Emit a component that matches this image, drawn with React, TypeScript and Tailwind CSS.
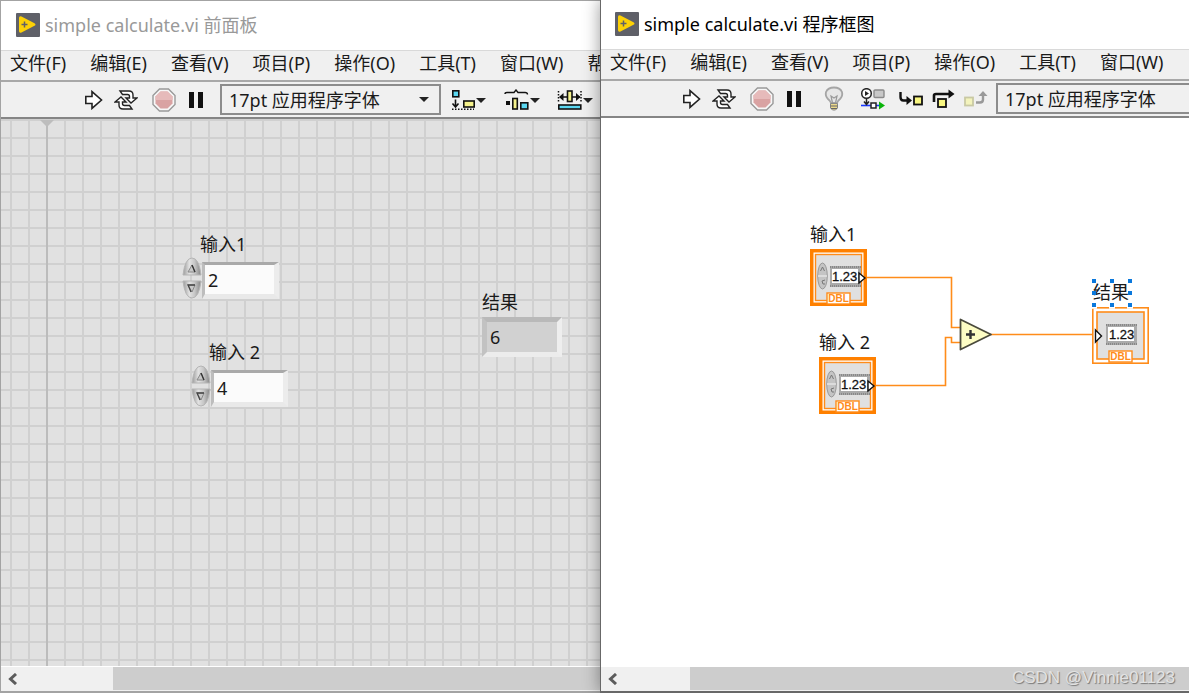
import { useState } from 'react';
import type { ReactNode } from 'react';

const diagramMenus = ['文件(F)', '编辑(E)', '查看(V)', '项目(P)', '操作(O)', '工具(T)', '窗口(W)'];
const panelMenus = [...diagramMenus, '帮'];

const fonts = "font-['Noto_Sans','Noto_Sans_CJK_SC',sans-serif]";

function LogoIcon() {
  return (
    <svg width="24" height="24" viewBox="0 0 24 24" className="shrink-0">
      <rect width="24" height="24" rx="1" fill="#5f6068" />
      <path d="M3 5Q3 2.500 5.500 3.400L18.500 10.200Q20.500 11.500 18.500 12.800L5.500 19.600Q3 20.400 3 18Z" fill="#fdd106" />
      <path d="M5.500 11.500H11.500M8.500 8.500V14.500" stroke="#5f6068" strokeWidth="1.5" />
    </svg>
  );
}

function RunIcon() {
  return (
    <svg width="18" height="20" viewBox="0 0 18 20">
      <path d="M.8 6.5H7V1.6L16.5 10L7 18.4V13.5H.8Z" fill="#fff" stroke="#222" strokeWidth="1.6" />
    </svg>
  );
}

function RunLoopIcon() {
  return (
    <svg width="24" height="20" viewBox="0 0 24 20" strokeWidth="1.4" stroke="#222" fill="#fff">
      <path d="M6 1H15Q19 1 19 5V8H23L17 13L12 8H15.500V6.500Q15.500 4.500 13.500 4.500H8.500Z" />
      <path d="M18 19H9Q5 19 5 15V12H1L7 7L12 12H8.500V13.500Q8.500 15.500 10.500 15.500H15.500Z" />
    </svg>
  );
}

function StopIcon() {
  return (
    <svg width="24" height="24" viewBox="0 0 24 24">
      <path d="M7.5 1H16.5L23 7.5V16.5L16.5 23H7.5L1 16.5V7.5Z" fill="#f7f7f7" stroke="#999" strokeWidth="1.4" />
      <path d="M8.5 3.5H15.5L20.5 8.5V15.5L15.5 20.5H8.5L3.5 15.5V8.5Z" fill="#d9a2a2" />
      <path d="M8.5 3.5H15.5L20.5 8.5V12H3.5V8.5Z" fill="#e6baba" />
    </svg>
  );
}

function PauseIcon() {
  return (
    <svg width="16" height="16" viewBox="0 0 16 16">
      <path d="M1 0H6V16H1ZM10 0H15V16H10Z" fill="#111" />
    </svg>
  );
}

function Caret() {
  return <path d="M0 0H10L5 5Z" fill="#222" />;
}

function AlignIcon() {
  return (
    <svg width="36" height="22" viewBox="0 0 36 22">
      <rect x="1.8" y="1.8" width="6" height="6" fill="#5ad7f0" stroke="#111" strokeWidth="1.6" />
      <path d="M4.5 10.5V17M1.5 14.5L4.5 18L7.5 14.5" fill="none" stroke="#111" strokeWidth="1.6" />
      <rect x="12.8" y="12" width="10.4" height="6" fill="#f5f28c" stroke="#111" strokeWidth="1.6" />
      <path d="M1 20.3H23" stroke="#111" strokeWidth="1.5" strokeDasharray="1.5 1.5" />
      <g transform="translate(25 9)"><Caret /></g>
    </svg>
  );
}

function DistributeIcon() {
  return (
    <svg width="36" height="22" viewBox="0 0 36 22">
      <path d="M1 5Q1 3.5 3 3.5H10L12 1L14 3.5H21Q23.500 3.500 23.5 5.5" fill="none" stroke="#111" strokeWidth="1.4" />
      <rect x="2" y="12" width="4" height="4" fill="#111" />
      <rect x="8.800" y="9.500" width="4.500" height="10.500" fill="#f5f28c" stroke="#111" strokeWidth="1.6" />
      <rect x="16.800" y="13.800" width="7" height="6.200" fill="#5ad7f0" stroke="#111" strokeWidth="1.6" />
      <g transform="translate(26 9)"><Caret /></g>
    </svg>
  );
}

function ResizeIcon() {
  return (
    <svg width="36" height="22" viewBox="0 0 36 22">
      <path d="M1.500 2V14M24 2V14" stroke="#111" strokeWidth="1.500" strokeDasharray="1.5 1.5" />
      <path d="M3 8H10M15 8H23" stroke="#111" strokeWidth="1.5" />
      <path d="M2 8L6.500 4V12ZM23.500 8L19 4V12Z" fill="#111" />
      <rect x="10.500" y="2" width="4.500" height="10.500" fill="#f5f28c" stroke="#111" strokeWidth="1.6" />
      <rect x="1.800" y="16" width="22" height="4" fill="#5ad7f0" stroke="#111" strokeWidth="1.6" />
      <g transform="translate(26 9)"><Caret /></g>
    </svg>
  );
}

function BulbIcon() {
  return (
    <svg width="20" height="26" viewBox="0 0 20 26">
      <path d="M7 17Q6.500 15 4 13Q1 10 2 6Q4 1.500 10 1.500T18 6Q19 10 16 13Q13.500 15 13 17Z" fill="#e6e6e6" stroke="#a5a5a5" strokeWidth="1.8" />
      <path d="M8.500 17L7 10L10 12L13 10L11.500 17" fill="none" stroke="#999" strokeWidth="1.2" />
      <path d="M6.500 17.500H13.500V22L11.500 24H8.500L6.500 22Z" fill="#ecd98a" stroke="#888" />
      <path d="M6.500 20H13.500M7 22.500H13" stroke="#666" strokeWidth="1.2" />
    </svg>
  );
}

function RetainIcon() {
  return (
    <svg width="26" height="22" viewBox="0 0 26 22">
      <circle cx="6.500" cy="5.500" r="4.800" fill="#fff" stroke="#222" strokeWidth="1.5" />
      <path d="M5 3L9 5.500L5 8Z" fill="#222" />
      <rect x="14" y="2" width="10" height="7.500" rx="1" fill="#c8c8c8" stroke="#8a8a8a" strokeWidth="1.400" />
      <path d="M1 17.500H20" stroke="#1838ff" strokeWidth="1.6" />
      <path d="M6.500 10.500V16M4 13.500L6.500 16.500L9 13.500" fill="none" stroke="#222" strokeWidth="1.5" />
      <rect x="11" y="15" width="5" height="5" fill="#fff" stroke="#222" strokeWidth="1.5" />
      <path d="M19 13.500L25 17.500L19 21.500Z" fill="#0ab40a" />
    </svg>
  );
}

function StepIntoIcon() {
  return (
    <svg width="26" height="18" viewBox="0 0 26 18">
      <path d="M1.500 2V7Q1.500 10.500 4.500 10.500H9" fill="none" stroke="#111" strokeWidth="2.4" />
      <path d="M7.500 6L13 10.500L7.500 15Z" fill="#111" />
      <rect x="15" y="6.500" width="8" height="8" fill="#f8f680" stroke="#111" strokeWidth="1.8" />
    </svg>
  );
}

function StepOverIcon() {
  return (
    <svg width="24" height="20" viewBox="0 0 24 20">
      <path d="M2 13V6.500Q2 5 4 5H17" fill="none" stroke="#111" strokeWidth="2.6" />
      <path d="M16.500 .5L22.500 5L16.500 9.500Z" fill="#111" />
      <rect x="6" y="10" width="8" height="8" fill="#f8f680" stroke="#111" strokeWidth="1.8" />
    </svg>
  );
}

function StepOutIcon() {
  return (
    <svg width="26" height="18" viewBox="0 0 26 18">
      <rect x="2" y="7.500" width="8" height="8" fill="#f3f3bc" stroke="#c9c9a4" strokeWidth="1.800" />
      <path d="M13 12.500H17Q20 12.500 20 9.500V5" fill="none" stroke="#999" strokeWidth="2.4" />
      <path d="M15.500 6L20 1L24.500 6Z" fill="#999" />
    </svg>
  );
}

function ToolButton({ label, children }: { label: string; children: ReactNode }) {
  return (
    <button aria-label={label} className="flex shrink-0 items-center justify-center">
      {children}
    </button>
  );
}

function TitleBar({ title, active }: { title: string; active?: boolean }) {
  return (
    <div className={`flex h-[49px] shrink-0 items-center gap-[5px] bg-white pb-[2px] ${active ? 'pl-[14px]' : 'pl-[15px]'}`}>
      <LogoIcon />
      <h1 className={`whitespace-pre text-[18px] leading-6 ${active ? 'text-black' : 'text-[#999]'}`}>{title}</h1>
    </div>
  );
}

function MenuBar({ menus }: { menus: string[] }) {
  return (
    <nav className="flex h-[32px] shrink-0 items-start gap-6 overflow-hidden border-t border-b-2 border-t-[#d9d9d9] border-b-[#a8a8a8] bg-[#f0f0f0] pl-[9px]">
      {menus.map((menu) => (
        <button key={menu} className="shrink-0 text-[18px] leading-6 text-[#1a1a1a]">
          {menu}
        </button>
      ))}
    </nav>
  );
}

function FontSelect() {
  return (
    <div className="relative shrink-0">
      <select
        aria-label="字体"
        className="block h-[31px] w-[221px] appearance-none border-2 border-[#8c8c8c] bg-[#f0f0f0] pl-[7px] text-[18px] leading-6 text-[#1a1a1a]"
      >
        <option>17pt 应用程序字体</option>
      </select>
      <svg width="10" height="5" className="pointer-events-none absolute right-3 top-[13px]">
        <Caret />
      </svg>
    </div>
  );
}

function RunButtons() {
  return (
    <>
      <ToolButton label="运行"><RunIcon /></ToolButton>
      <div className="ml-[11px] flex"><ToolButton label="连续运行"><RunLoopIcon /></ToolButton></div>
      <div className="ml-[14px] flex"><ToolButton label="中止执行"><StopIcon /></ToolButton></div>
      <div className="ml-[12px] flex"><ToolButton label="暂停"><PauseIcon /></ToolButton></div>
    </>
  );
}

function ScrollBar({ trackClass }: { trackClass: string }) {
  return (
    <div className="flex h-[25px] shrink-0 items-stretch border-t border-white bg-[#f0f0f0]">
      <button aria-label="向左滚动" className={`flex shrink-0 items-center pl-[5px] ${trackClass}`}>
        <svg width="12" height="12" viewBox="0 0 12 12">
          <path d="M10 1L4.500 6L10 11" fill="none" stroke="#5c5c5c" strokeWidth="3" />
        </svg>
      </button>
      <div className="mb-px flex-1 bg-[#cdcdcd]" />
    </div>
  );
}

function Spinner() {
  return (
    <svg width="20" height="42" viewBox="0 0 20 42">
      <defs>
        <linearGradient id="metal" x1="0" x2="1">
          <stop offset="0" stopColor="#999" />
          <stop offset=".35" stopColor="#e2e2e2" />
          <stop offset=".65" stopColor="#c6c6c6" />
          <stop offset="1" stopColor="#858585" />
        </linearGradient>
      </defs>
      <path d="M1 18Q3 1 10 1T19 18Z" fill="url(#metal)" stroke="#b5b5b5" />
      <path d="M1 24H19Q17 41 10 41T1 24Z" fill="url(#metal)" stroke="#b5b5b5" />
      <path d="M6 15L10 8L13 15Z" fill="#c8c8c8" stroke="#888" />
      <path d="M10 8L13 15" stroke="#333" strokeWidth="1.4" />
      <path d="M6 28H13L10 35Z" fill="#c8c8c8" stroke="#888" />
      <path d="M13 28H6L9 35" fill="none" stroke="#444" strokeWidth="1.3" />
    </svg>
  );
}

function NumericControl({ id, label, value, onChange }: { id: string; label: string; value: string; onChange: (value: string) => void }) {
  return (
    <div className="w-[98px]">
      <label htmlFor={id} className="block whitespace-pre pl-[18px] text-[18px] leading-6 text-[#1a1a1a]">
        {label}
      </label>
      <div className="mt-px flex items-end">
        <Spinner />
        <input
          id={id}
          value={value}
          onChange={(e) => onChange(e.target.value)}
          className="h-[37px] w-[77px] border-t-[3px] border-r-[5px] border-b-[5px] border-l-[3px] border-t-[#a9a9a9] border-r-[#ececec] border-b-[#e9e9e9] border-l-[#bdbdbd] bg-[#fbfbfb] pl-[3px] text-[18px] leading-6 text-[#1a1a1a]"
        />
      </div>
    </div>
  );
}

function FrontPanel({ a, b, setA, setB }: { a: string; b: string; setA: (v: string) => void; setB: (v: string) => void }) {
  const sum = Number(a) + Number(b);

  return (
    <section className="flex min-w-0 flex-col overflow-hidden border-t border-b-2 border-l border-[#a3a3a3] bg-[#f0f0f0]">
      <TitleBar title="simple calculate.vi 前面板" />
      <MenuBar menus={panelMenus} />
      <div className="flex h-[37px] shrink-0 items-center overflow-hidden border-b-2 border-[#858585] pl-[84px]">
        <RunButtons />
        <div className="ml-[16px] flex items-center gap-[10px]">
          <FontSelect />
          <div className="flex gap-[17px]">
            <ToolButton label="对齐对象"><AlignIcon /></ToolButton>
            <ToolButton label="分布对象"><DistributeIcon /></ToolButton>
            <ToolButton label="调整对象大小"><ResizeIcon /></ToolButton>
          </div>
        </div>
      </div>

      {/* Panel canvas with an 18px alignment grid */}
      <div className="relative flex-1 overflow-hidden bg-[#e1e1e1] bg-[linear-gradient(#d0d0d0_2px,transparent_2px),linear-gradient(90deg,#d0d0d0_2px,transparent_2px)] bg-size-[18px_18px] bg-position-[9px_0px]">
        <svg width="16" height="100%" className="absolute left-[38px] top-0">
          <path d="M1 1H15L8 8Z" fill="#bdbdbd" />
          <rect x="7" y="7" width="2" height="100%" fill="#bcbcbc" />
        </svg>
        <div className="absolute left-[181px] top-[113px]">
          <NumericControl id="input-1" label="输入1" value={a} onChange={setA} />
        </div>
        <div className="absolute left-[190px] top-[221px]">
          <NumericControl id="input-2" label="输入 2" value={b} onChange={setB} />
        </div>
        <div className="absolute left-[481px] top-[171px]">
          <label htmlFor="result" className="block text-[18px] leading-6 text-[#1a1a1a]">结果</label>
          <output
            id="result"
            className="mt-[3px] block h-[40px] w-[80px] border-5 border-t-[#b9b9b9] border-r-[#eeeeee] border-b-[#ececec] border-l-[#c2c2c2] bg-[#d1d1d1] pl-[3px] text-[18px] leading-[30px] text-[#1a1a1a]"
          >
            {sum}
          </output>
        </div>
      </div>
      <ScrollBar trackClass="w-[112px]" />
    </section>
  );
}

function ControlTerminal() {
  return (
    <svg width="57" height="57" viewBox="0 0 57 57" className="block">
      <rect width="57" height="57" fill="#ff8000" />
      <rect x="3.500" y="3.500" width="50" height="50" fill="#fff" />
      <rect x="5.500" y="5.500" width="46" height="46" fill="#e0e0e0" stroke="#ff8c1a" strokeWidth="1.400" />
      <rect x="20" y="17" width="31" height="21" fill="#aaa" />
      <path d="M20 18H51M20 37H51" stroke="#888" strokeDasharray="1 1" strokeWidth="2" />
      <ellipse cx="12.500" cy="27" rx="4.800" ry="13" fill="#c4c4c4" stroke="#999" />
      <path d="M8 27H17" stroke="#e4e4e4" strokeWidth="1.5" />
      <path d="M10.500 22L12.500 18L14.500 22M15 31L12 32L13 35L15 35" fill="none" stroke="#777" />
      <rect x="22" y="20" width="26" height="14" fill="#fff" />
      <text x="22" y="32" fontSize="13" fill="#111" stroke="#111" strokeWidth=".3" className="font-['Liberation_Sans',sans-serif]">1.23</text>
      <path d="M49 24L55 29L49 34Z" fill="#fff" stroke="#111" strokeWidth="1.4" />
      <rect x="17" y="44" width="23" height="11" fill="#fff" stroke="#ff8c1a" strokeWidth="1.400" />
      <text x="28.500" y="53" fontSize="10" fontWeight="bold" textAnchor="middle" fill="#ff8c1a" className="font-['Liberation_Sans',sans-serif]">DBL</text>
    </svg>
  );
}

function IndicatorTerminal() {
  return (
    <svg width="57" height="57" viewBox="0 0 57 57" className="block">
      <rect x=".8" y=".8" width="55.400" height="55.400" fill="#fff" stroke="#ff8c1a" strokeWidth="1.600" />
      <path d="M0 .8H5M17 .8H23M35 .8H41" stroke="#fff" strokeWidth="1.800" />
      <rect x="5" y="5" width="47" height="47" fill="#e0e0e0" stroke="#ff8c1a" strokeWidth="1.600" />
      <rect x="14" y="17" width="31" height="21" fill="#aaa" />
      <path d="M14 18H45M14 37H45" stroke="#888" strokeWidth="2" strokeDasharray="1 1" />
      <rect x="16" y="20" width="26" height="14" fill="#fff" />
      <text x="17" y="32" fontSize="13" fill="#111" stroke="#111" strokeWidth=".3" className="font-['Liberation_Sans',sans-serif]">1.23</text>
      <path d="M3.500 23L9.500 29L3.500 35Z" fill="#fff" stroke="#111" strokeWidth="1.4" />
      <rect x="17" y="44" width="23" height="11" fill="#fff" stroke="#ff8c1a" strokeWidth="1.400" />
      <text x="28.500" y="53" fontSize="10" fontWeight="bold" textAnchor="middle" fill="#ff8c1a" className="font-['Liberation_Sans',sans-serif]">DBL</text>
    </svg>
  );
}

function SelectionHandles() {
  return (
    <svg width="41" height="29" viewBox="0 0 41 29" className="absolute -top-px left-0">
      {[0, 18, 36].map((x) =>
        [0, 12, 24].map((y) =>
          x === 18 && y === 12 ? null : <rect key={`${x}-${y}`} x={x} y={y} width="4" height="4" fill="#0a78dc" />
        )
      )}
    </svg>
  );
}

function BlockDiagram() {
  return (
    <section className="relative flex min-w-0 flex-col overflow-hidden border-b-2 border-l border-[#686868] bg-[#f0f0f0] shadow-[0_0_16px_rgba(0,0,0,0.4)]">
      <TitleBar title="simple calculate.vi 程序框图" active />
      <MenuBar menus={diagramMenus} />
      <div className="flex h-[37px] shrink-0 items-center overflow-hidden border-b-2 border-[#858585] pl-[82px]">
        <RunButtons />
        <div className="ml-[22px] flex items-center">
          <ToolButton label="高亮显示执行过程"><BulbIcon /></ToolButton>
          <div className="ml-[16px] flex items-center gap-[13px]">
            <ToolButton label="保存连线值"><RetainIcon /></ToolButton>
            <div className="flex items-center gap-[7px]">
              <ToolButton label="单步步入"><StepIntoIcon /></ToolButton>
              <ToolButton label="单步步过"><StepOverIcon /></ToolButton>
              <ToolButton label="单步步出"><StepOutIcon /></ToolButton>
              <FontSelect />
            </div>
          </div>
        </div>
      </div>

      {/* Diagram canvas */}
      <div className="relative flex-1 overflow-hidden bg-white">
        <svg width="560" height="320" viewBox="0 0 560 320" className="absolute left-0 top-0">
          <g fill="none" stroke="#ff8c1a" strokeWidth="1.6">
            <path d="M264 159.500H350.500V209.500H360" />
            <path d="M273 267.500H344.500V219.500H350.500V224.500H360" />
            <path d="M389 216.500H493" />
          </g>
          <path d="M359.500 201.500L390 216.500L359.500 231.500Z" fill="#fdfdc4" stroke="#4a4a3c" strokeWidth="1.8" strokeLinejoin="round" />
          <path d="M365 216.500H374M369.500 212V221" stroke="#333" strokeWidth="2.400" />
        </svg>

        <div className="absolute left-[209px] top-[104px]">
          <p className="text-[18px] leading-6 text-[#1a1a1a]">输入1</p>
          <div className="mt-[3px]"><ControlTerminal /></div>
        </div>
        <div className="absolute left-[218px] top-[212px]">
          <p className="text-[18px] leading-6 text-[#1a1a1a]">输入 2</p>
          <div className="mt-[3px]"><ControlTerminal /></div>
        </div>
        <div className="absolute left-[491px] top-[162px]">
          <p className="pl-px text-[18px] leading-6 text-[#1a1a1a]">结果</p>
          <div className="mt-[3px]"><IndicatorTerminal /></div>
          <SelectionHandles />
        </div>
      </div>

      <div className="relative">
        <ScrollBar trackClass="w-[89px]" />
        <p className="absolute bottom-[3px] right-[14px] font-['Liberation_Sans',sans-serif] text-[17px] leading-5 text-[#e2e2e2] [text-shadow:1px_1px_1px_#777]">
          CSDN @Vinnie01123
        </p>
      </div>
    </section>
  );
}

export default function App() {
  const [a, setA] = useState('2');
  const [b, setB] = useState('4');

  return (
    <main className={`grid h-screen grid-cols-[600fr_589fr] overflow-hidden bg-white ${fonts}`}>
      <FrontPanel a={a} b={b} setA={setA} setB={setB} />
      <BlockDiagram />
    </main>
  );
}
